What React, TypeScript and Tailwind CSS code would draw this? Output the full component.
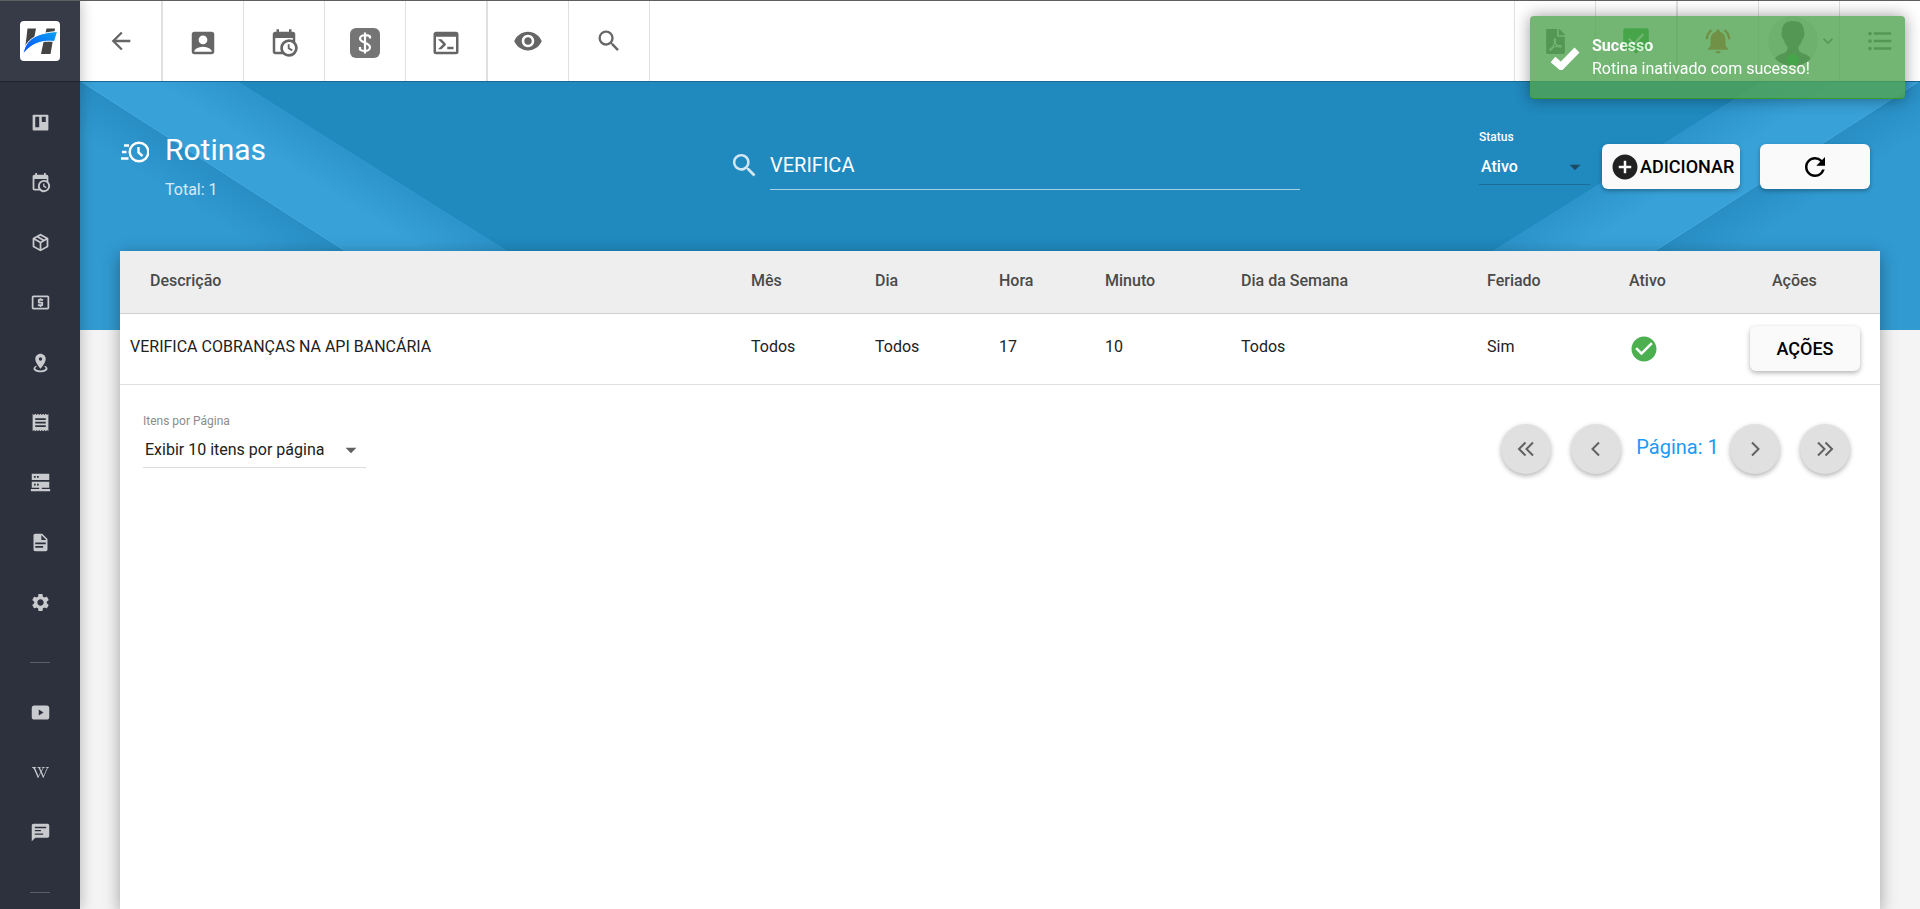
import { useState, type ReactNode } from 'react';
import {
  MdAccountBox,
  MdAddCircle,
  MdArrowBack,
  MdArrowDropDown,
  MdCheckCircle,
  MdExpandMore,
  MdFormatListBulleted,
  MdLocalAtm,
  MdNotificationsActive,
  MdReceipt,
  MdRefresh,
  MdRemoveRedEye,
  MdSearch,
  MdSettings,
} from 'react-icons/md';
import { FaFilePdf, FaWikipediaW } from 'react-icons/fa';

interface Rotina {
  id: number;
  descricao: string;
  mes: string;
  dia: string;
  hora: string;
  minuto: string;
  diaSemana: string;
  feriado: string;
}

const rotinas: Rotina[] = [
  {
    id: 1,
    descricao: 'VERIFICA COBRANÇAS NA API BANCÁRIA',
    mes: 'Todos',
    dia: 'Todos',
    hora: '17',
    minuto: '10',
    diaSemana: 'Todos',
    feriado: 'Sim',
  },
];

const paths = {
  calendarClock:
    'M15,13H16.5V15.82L18.94,17.23L18.19,18.53L15,16.69V13M19,8H5V19H9.67C9.24,18.09 9,17.07 9,16A7,7 0 0,1 16,9C17.07,9 18.09,9.24 19,9.67V8M5,21C3.89,21 3,20.1 3,19V5C3,3.89 3.89,3 5,3H6V1H8V3H16V1H18V3H19A2,2 0 0,1 21,5V11.1C22.24,12.36 23,14.09 23,16A7,7 0 0,1 16,23C14.09,23 12.36,22.24 11.1,21H5M16,11.15A4.85,4.85 0 0,0 11.15,16C11.15,18.68 13.32,20.85 16,20.85A4.85,4.85 0 0,0 20.85,16C20.85,13.32 18.68,11.15 16,11.15Z',
  console:
    'M20,19V7H4V19H20M20,3A2,2 0 0,1 22,5V19A2,2 0 0,1 20,21H4A2,2 0 0,1 2,19V5C2,3.89 2.9,3 4,3H20M13,17V15H18V17H13M9.58,13L5.57,9H8.4L11.7,12.3C12.09,12.69 12.09,13.33 11.7,13.72L8.42,17H5.59L9.58,13Z',
  board: 'M4,3H20A1,1 0 0,1 21,4V20A1,1 0 0,1 20,21H4A1,1 0 0,1 3,20V4A1,1 0 0,1 4,3M6,5.5V17.5H10.5V5.5H6M13.5,5.5V11.5H18V5.5H13.5Z',
  box: 'M21,16.5C21,16.88 20.79,17.21 20.47,17.38L12.57,21.82C12.41,21.94 12.21,22 12,22C11.79,22 11.59,21.94 11.43,21.82L3.53,17.38C3.21,17.21 3,16.88 3,16.5V7.5C3,7.12 3.21,6.79 3.53,6.62L11.43,2.18C11.59,2.06 11.79,2 12,2C12.21,2 12.41,2.06 12.57,2.18L20.47,6.62C20.79,6.79 21,7.12 21,7.5V16.5M12,4.15L10.11,5.22L16,8.61L17.96,7.5L12,4.15M6.04,7.5L12,10.85L13.96,9.75L8.08,6.35L6.04,7.5M5,15.91L11,19.29V12.58L5,9.21V15.91M19,15.91V9.21L13,12.58V19.29L19,15.91Z',
  marker:
    'M12,2C15.31,2 18,4.66 18,7.95C18,12.41 12,19 12,19C12,19 6,12.41 6,7.95C6,4.66 8.69,2 12,2M12,6A2,2 0 0,0 10,8A2,2 0 0,0 12,10A2,2 0 0,0 14,8A2,2 0 0,0 12,6M20,19C20,21.21 16.42,23 12,23C7.58,23 4,21.21 4,19C4,17.71 5.22,16.56 7.11,15.83L7.75,16.74C6.67,17.19 6,17.81 6,18.5C6,19.88 8.69,21 12,21C15.31,21 18,19.88 18,18.5C18,17.81 17.33,17.19 16.25,16.74L16.89,15.83C18.78,16.56 20,17.71 20,19Z',
  server:
    'M2,2H22V9H2V2M4.5,4.5V6.5H6.5V4.5H4.5M8,4.5V6.5H10V4.5H8M2,11H22V18H13.5V19.5H23V22H1V19.5H10.5V18H2V11M4.5,13.5V15.5H6.5V13.5H4.5M8,13.5V15.5H10V13.5H8Z',
  file: 'M13,9H18.5L13,3.5V9M6,2H14L20,8V20A2,2 0 0,1 18,22H6C4.89,22 4,21.1 4,20V4C4,2.89 4.89,2 6,2M15,18V16H6V18H15M18,14V12H6V14H18Z',
  youtube: 'M5,4H19A3,3 0 0,1 22,7V17A3,3 0 0,1 19,20H5A3,3 0 0,1 2,17V7A3,3 0 0,1 5,4M10,8.5V15.5L15.5,12L10,8.5Z',
  comment:
    'M20,2A2,2 0 0,1 22,4V16A2,2 0 0,1 20,18H6L2,22V4C2,2.89 2.9,2 4,2H20M5.5,5.5V7H18.5V5.5H5.5M5.5,9.2V10.7H12.5V9.2H5.5M5.5,13V14.5H15V13H5.5Z',
  messageCheck:
    'M4.500,3H19.500A1.500,1.500 0 0,1 21,4.500V17A1.500,1.500 0 0,1 19.500,18.500H14.500L12,21L9.500,18.500H4.500A1.500,1.500 0 0,1 3,17V4.500A1.500,1.500 0 0,1 4.500,3M10.500,15L17.800,7.700L16.700,6.600L10.500,12.800L7.500,9.800L6.400,10.900L10.500,15Z',
};

function Icon({ d, className }: { d: string; className?: string }) {
  return (
    <svg viewBox="0 0 24 24" fill="currentColor" fillRule="evenodd" className={className} aria-hidden="true">
      <path d={d} />
    </svg>
  );
}

function Logo() {
  return (
    <svg viewBox="0 0 40 40" className="size-10" aria-hidden="true">
      <defs>
        <linearGradient id="logo-swoosh" x1="0" y1="1" x2="1" y2="0">
          <stop offset="0" stopColor="#0a4dff" />
          <stop offset="1" stopColor="#0aa2f0" />
        </linearGradient>
      </defs>
      <rect width="40" height="40" rx="4" fill="#fff" />
      <path d="M7.500 7.500h8.500l-2.500 13-8.500 8z" fill="#444" />
      <path d="M26.500 7.500h8.500l-4.500 25.500h-9.500l2.500-12z" fill="#444" />
      <path
        d="M3 33C5 21.500 12 12 37.500 10.500L34.500 20.500C22 19 11.500 22.500 3 33Z"
        fill="url(#logo-swoosh)"
        stroke="#fff"
        strokeWidth="1"
      />
    </svg>
  );
}

function DollarIcon() {
  return (
    <svg viewBox="0 0 30 30" className="mt-1 size-[30px]" aria-hidden="true">
      <rect width="30" height="30" rx="6" fill="#757575" />
      <path
        d="M20 10.500V8.500C18 7 10.500 6 10 10.500C10 15 20 14 20 19.500C19.500 24 12 23.500 10 21.500V19M15 4.500V25.500"
        fill="none"
        stroke="#fff"
        strokeWidth="2.200"
      />
    </svg>
  );
}

function ClockFastIcon() {
  return (
    <svg viewBox="0 0 28 22" className="h-[22px] w-7" fill="none" stroke="#fff" strokeWidth="2.400" aria-hidden="true">
      <circle cx="18" cy="11" r="9.300" />
      <path d="M17.500 6v5.500l4 3.500M3 4.500h5M1 11h4.500M0 17.500h7.500" />
    </svg>
  );
}

function Avatar() {
  return (
    <svg viewBox="0 0 50 50" className="ml-2 size-[50px] shrink-0" aria-hidden="true">
      <circle cx="25" cy="25" r="25" fill="#e6e6e6" />
      <path
        d="M25 5c-8 0-11 4-11 10 0 2-1 3 0 6 .5 2 1.500 2 2 3 .5 4 3 5 3.500 7 .5 4-1.500 5-5 6.500-4 1.500-6 2.500-7.500 5A25 25 0 0 0 25 50a25 25 0 0 0 18-7.500c-1.500-2.500-3.500-3.500-7.500-5-3.500-1.500-5.500-2.500-5-6.500.5-2 3-3 3.500-7 .5-1 1.500-1 2-3 1-3 0-4 0-6 0-6-3-10-11-10z"
        fill="#666"
      />
      <circle cx="25" cy="44" r="6" fill="#1fae2a" />
    </svg>
  );
}

// Faixas diagonais do cabeçalho azul, espelhadas em cada lado
function HeaderStripes({ id, className }: { id: string; className: string }) {
  return (
    <svg viewBox="0 0 560 249" className={className} aria-hidden="true">
      <defs>
        <linearGradient id={`${id}-faixa`} gradientUnits="userSpaceOnUse" x1="290" y1="83" x2="266" y2="121">
          <stop offset="0" stopColor="#2c94cb" />
          <stop offset="1" stopColor="#38a1d8" />
        </linearGradient>
        <linearGradient id={`${id}-canto`} gradientUnits="userSpaceOnUse" x1="130" y1="83" x2="106" y2="121">
          <stop offset="0" stopColor="#288ec4" />
          <stop offset="1" stopColor="#319ad1" />
        </linearGradient>
      </defs>
      <path d="M0 0H158L554 249H0Z" fill={`url(#${id}-faixa)`} />
      <path d="M0 0L388 249H0Z" fill={`url(#${id}-canto)`} />
      <path d="M158 0L554 249" stroke="#3a9fd4" strokeOpacity="0.5" />
      <path d="M0 0L388 249" stroke="#2586ba" strokeOpacity="0.6" />
      <path d="M2 0L390 249" stroke="#4badde" strokeOpacity="0.5" />
    </svg>
  );
}

function TopButton({ label, className, children }: { label: string; className: string; children: ReactNode }) {
  return (
    <button
      type="button"
      aria-label={label}
      className={`box-content flex h-20 w-20 items-center justify-center border-[#e0e0e0] text-[#666] ${className}`}
    >
      {children}
    </button>
  );
}

const menuIcon = 'size-[21px]';

const menu = [
  { label: 'Painel', icon: <Icon d={paths.board} className={menuIcon} /> },
  { label: 'Agenda', icon: <Icon d={paths.calendarClock} className={menuIcon} /> },
  { label: 'Produtos', icon: <Icon d={paths.box} className={menuIcon} /> },
  { label: 'Financeiro', icon: <MdLocalAtm className={menuIcon} /> },
  { label: 'Mapa', icon: <Icon d={paths.marker} className={menuIcon} /> },
  { label: 'Notas', icon: <MdReceipt className={menuIcon} /> },
  { label: 'Servidores', icon: <Icon d={paths.server} className={menuIcon} /> },
  { label: 'Relatórios', icon: <Icon d={paths.file} className={menuIcon} /> },
  { label: 'Configurações', icon: <MdSettings className={menuIcon} /> },
];

const menuAjuda = [
  { label: 'Vídeos', icon: <Icon d={paths.youtube} className={menuIcon} /> },
  { label: 'Wiki', icon: <FaWikipediaW className="size-[17px]" /> },
  { label: 'Chat', icon: <Icon d={paths.comment} className={menuIcon} /> },
];

function MenuLink({ label, children }: { label: string; children: ReactNode }) {
  return (
    <a href="#" aria-label={label} className="flex h-15 shrink-0 items-center justify-center text-[#c9cace]">
      {children}
    </a>
  );
}

function MenuDivider() {
  return <div className="mx-auto mt-[30px] mb-[19px] w-5 shrink-0 border-t border-[#5b5e69]" />;
}

function PageButton({ label, children }: { label: string; children: ReactNode }) {
  return (
    <button
      type="button"
      aria-label={label}
      className="flex size-[50px] items-center justify-center rounded-full bg-[#e0e0e0] text-[#616161] shadow-[0_2px_5px_rgba(0,0,0,0.3)]"
    >
      {children}
    </button>
  );
}

function Chevrons({ d }: { d: string }) {
  return (
    <svg viewBox="0 0 20 20" className="size-5" fill="none" stroke="currentColor" strokeWidth="2" aria-hidden="true">
      <path d={d} />
    </svg>
  );
}

export default function App() {
  const [busca, setBusca] = useState('VERIFICA');
  const [status, setStatus] = useState('Ativo');
  const [itens, setItens] = useState('10');

  return (
    <div className="flex h-screen overflow-hidden bg-[#f4f4f4] font-[Roboto,sans-serif] text-base text-[#212121]">
      {/* Menu lateral */}
      <nav className="z-10 flex w-20 shrink-0 flex-col overflow-hidden bg-[#2d303d] shadow-[2px_0_12px_rgba(0,0,0,0.22)]">
        <div className="flex h-[82px] shrink-0 items-center justify-center border-t border-b border-t-[#5f5f66] border-b-[#20222c] bg-[#373a47]">
          <Logo />
        </div>
        <div className="flex flex-col pt-2.5">
          {menu.map((item) => (
            <MenuLink key={item.label} label={item.label}>
              {item.icon}
            </MenuLink>
          ))}
          <MenuDivider />
          {menuAjuda.map((item) => (
            <MenuLink key={item.label} label={item.label}>
              {item.icon}
            </MenuLink>
          ))}
          <MenuDivider />
        </div>
      </nav>

      <div className="flex min-w-0 flex-1 flex-col">
        {/* Barra superior */}
        <header className="flex h-[81px] shrink-0 border-t border-[#5f5f5f] bg-white pl-px">
          <TopButton label="Voltar" className="border-r-2">
            <MdArrowBack className="size-7" />
          </TopButton>
          <TopButton label="Clientes" className="border-r">
            <MdAccountBox className="mt-1 size-[30px]" />
          </TopButton>
          <TopButton label="Agenda" className="border-r">
            <Icon d={paths.calendarClock} className="mt-1 size-[30px]" />
          </TopButton>
          <TopButton label="Financeiro" className="border-r">
            <DollarIcon />
          </TopButton>
          <TopButton label="Console" className="border-r-2">
            <Icon d={paths.console} className="mt-1 size-[30px]" />
          </TopButton>
          <TopButton label="Visualizar" className="border-r">
            <MdRemoveRedEye className="size-[30px]" />
          </TopButton>
          <TopButton label="Pesquisar" className="border-r">
            <MdSearch className="size-7" />
          </TopButton>
          <div className="flex-1" />
          <TopButton label="PDF" className="border-l">
            <FaFilePdf className="size-[25px]" />
          </TopButton>
          <TopButton label="Tarefas" className="border-l">
            <Icon d={paths.messageCheck} className="size-[34px] text-[#1fae2a]" />
          </TopButton>
          <TopButton label="Notificações" className="border-l-2">
            <MdNotificationsActive className="size-[30px] text-[#f4511e]" />
          </TopButton>
          <TopButton label="Perfil" className="border-l">
            <Avatar />
            <MdExpandMore className="size-5" />
          </TopButton>
          <TopButton label="Menu" className="border-l">
            <MdFormatListBulleted className="size-[30px]" />
          </TopButton>
        </header>

        <main className="relative flex min-h-0 flex-1 flex-col px-10">
          <div className="absolute inset-x-0 top-0 h-[249px] overflow-hidden border-t border-[#176a94] bg-[#2089be]">
            <HeaderStripes id="esq" className="absolute top-0 left-0 h-[249px] w-[560px]" />
            <HeaderStripes id="dir" className="absolute top-0 right-0 h-[249px] w-[560px] -scale-x-100" />
          </div>

          <div className="relative grid h-[170px] shrink-0 grid-cols-[613fr_567fr_580fr] text-white">
            <div className="flex gap-4 pt-[49px] pl-px">
              <div className="flex h-11 items-center">
                <ClockFastIcon />
              </div>
              <div>
                <h1 className="text-[30px] leading-10">Rotinas</h1>
                <p className="mt-2 text-white/80">Total: {rotinas.length}</p>
              </div>
            </div>

            <div className="flex items-start pt-[59px]">
              <label htmlFor="busca" aria-label="Pesquisar" className="flex h-[51px] w-[37px] shrink-0 items-center">
                <MdSearch className="-ml-1 size-[31px] text-white/80" />
              </label>
              <input
                id="busca"
                type="text"
                value={busca}
                onChange={(e) => setBusca(e.target.value)}
                className="h-[50px] min-w-0 flex-1 border-b border-white/60 bg-transparent text-xl outline-none"
              />
            </div>

            <div className="flex items-start justify-end pt-[48px] pr-2.5">
              <div className="w-[111px]">
                <label htmlFor="status" className="block text-xs font-medium">
                  Status
                </label>
                <div className="relative mt-[9px] border-b border-[#1b6c96]">
                  <select
                    id="status"
                    value={status}
                    onChange={(e) => setStatus(e.target.value)}
                    className="h-[30px] w-full appearance-none bg-transparent pb-1 pl-0.5 font-medium outline-none"
                  >
                    <option>Ativo</option>
                    <option>Inativo</option>
                  </select>
                  <MdArrowDropDown className="pointer-events-none absolute top-0 right-0.5 size-[26px] text-[#1c4a62]" />
                </div>
              </div>
              <button
                type="button"
                className="mt-[15px] ml-3 flex h-[45px] w-[138px] items-center rounded-md bg-[#fafafa] pl-2 text-lg font-medium text-black shadow-[0_2px_4px_rgba(0,0,0,0.3)]"
              >
                <MdAddCircle className="size-[30px] shrink-0 text-[#212121]" />
                ADICIONAR
              </button>
              <button
                type="button"
                aria-label="Atualizar"
                className="mt-[15px] ml-5 flex h-[45px] w-[110px] items-center justify-center rounded-md bg-[#fafafa] text-black shadow-[0_2px_4px_rgba(0,0,0,0.3)]"
              >
                <MdRefresh className="size-[30px]" />
              </button>
            </div>
          </div>

          {/* Tabela de rotinas */}
          <section className="relative flex-1 bg-white shadow-[0_4px_16px_rgba(0,0,0,0.35)]">
            <table className="w-full table-fixed border-collapse text-left">
              <thead className="bg-[#eee] text-[#4a4a4a]">
                <tr className="h-[62px] border-b border-[#d0d0d0] *:px-2.5 *:pb-0.5 *:font-medium">
                  <th>
                    <span className="pl-5">Descrição</span>
                  </th>
                  <th className="w-[124px]">Mês</th>
                  <th className="w-[124px]">Dia</th>
                  <th className="w-[106px]">Hora</th>
                  <th className="w-[136px]">Minuto</th>
                  <th className="w-[246px]">Dia da Semana</th>
                  <th className="w-[142px]">Feriado</th>
                  <th className="w-[121px]">Ativo</th>
                  <th className="w-[140px]">
                    <span className="pl-[22px]">Ações</span>
                  </th>
                </tr>
              </thead>
              <tbody>
                {rotinas.map((rotina) => (
                  <tr
                    key={rotina.id}
                    className="h-[71px] border-b border-[#e0e0e0] *:px-2.5 [&>td:nth-child(-n+7)]:pb-1"
                  >
                    <td>{rotina.descricao}</td>
                    <td>{rotina.mes}</td>
                    <td>{rotina.dia}</td>
                    <td>{rotina.hora}</td>
                    <td>{rotina.minuto}</td>
                    <td>{rotina.diaSemana}</td>
                    <td>{rotina.feriado}</td>
                    <td>
                      <MdCheckCircle className="size-[30px] text-[#4caf50]" aria-label="Ativo" />
                    </td>
                    <td>
                      <button
                        type="button"
                        className="h-[45px] w-[110px] rounded-md bg-[#fafafa] text-lg font-medium text-black shadow-[0_2px_5px_rgba(0,0,0,0.3)]"
                      >
                        AÇÕES
                      </button>
                    </td>
                  </tr>
                ))}
              </tbody>
            </table>

            {/* Paginação */}
            <div className="flex items-start justify-between pt-7 pr-[30px] pl-[23px]">
              <div className="w-[223px]">
                <label htmlFor="itens" className="block text-xs text-[#8c8c8c]">
                  Itens por Página
                </label>
                <div className="relative mt-2 border-b border-[#dcdcdc]">
                  <select
                    id="itens"
                    value={itens}
                    onChange={(e) => setItens(e.target.value)}
                    className="h-[30px] w-full appearance-none bg-transparent pb-1 pl-0.5 outline-none"
                  >
                    <option value="10">Exibir 10 itens por página</option>
                    <option value="25">Exibir 25 itens por página</option>
                  </select>
                  <MdArrowDropDown className="pointer-events-none absolute top-0 right-0.5 size-[26px] text-[#616161]" />
                </div>
              </div>
              <div className="flex items-center pt-[11px]">
                <PageButton label="Primeira página">
                  <Chevrons d="M9.500 3.500l-6.500 6.500 6.500 6.500M17 3.500l-6.500 6.500 6.500 6.500" />
                </PageButton>
                <div className="w-5" />
                <PageButton label="Página anterior">
                  <Chevrons d="M13 3.500l-6.500 6.500 6.500 6.500" />
                </PageButton>
                <span className="w-[109px] pb-1 pl-1 text-center text-xl text-[#1a9af5]">Página: 1</span>
                <PageButton label="Próxima página">
                  <Chevrons d="M7 3.500l6.500 6.500-6.500 6.500" />
                </PageButton>
                <div className="w-5" />
                <PageButton label="Última página">
                  <Chevrons d="M3 3.500l6.500 6.500-6.500 6.500M10.500 3.500l6.500 6.500-6.500 6.500" />
                </PageButton>
              </div>
            </div>
          </section>
        </main>
      </div>

      {/* Notificação */}
      <div
        role="alert"
        className="fixed top-4 right-[15px] z-20 flex h-[83px] w-[375px] gap-3 rounded border-b border-[#3c9a00] bg-[#51a351] pt-[18px] pl-5 text-white opacity-80 shadow-[0_0_16px_rgba(0,0,0,0.5)]"
      >
        <svg viewBox="0 0 30 24" className="mt-3 h-6 w-[30px]" fill="none" stroke="#fff" strokeWidth="7" aria-hidden="true">
          <path d="M3 13.500l8 7L27 4" />
        </svg>
        <div className="leading-[23px]">
          <p className="font-bold">Sucesso</p>
          <p>Rotina inativado com sucesso!</p>
        </div>
      </div>
    </div>
  );
}
